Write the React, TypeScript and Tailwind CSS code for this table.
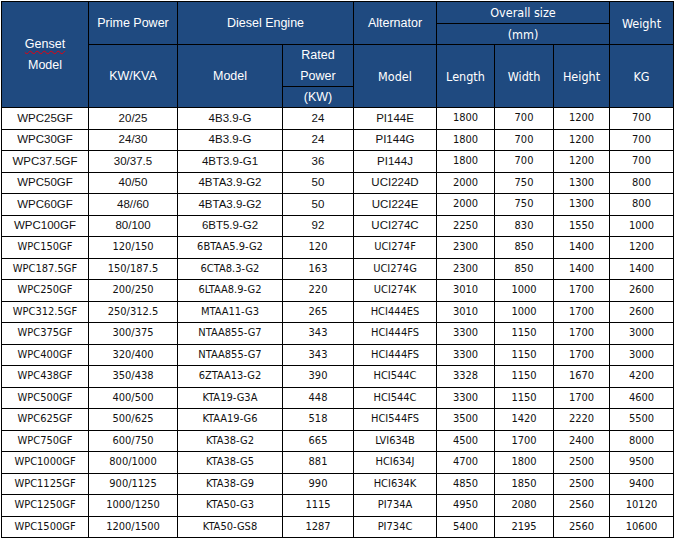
const rows = [
  ["WPC25GF", "20/25", "4B3.9-G", "24", "PI144E", "1800", "700", "1200", "700"],
  ["WPC30GF", "24/30", "4B3.9-G", "24", "PI144G", "1800", "700", "1200", "700"],
  ["WPC37.5GF", "30/37.5", "4BT3.9-G1", "36", "PI144J", "1800", "700", "1200", "700"],
  ["WPC50GF", "40/50", "4BTA3.9-G2", "50", "UCI224D", "2000", "750", "1300", "800"],
  ["WPC60GF", "48//60", "4BTA3.9-G2", "50", "UCI224E", "2000", "750", "1300", "800"],
  ["WPC100GF", "80/100", "6BT5.9-G2", "92", "UCI274C", "2250", "830", "1550", "1000"],
  ["WPC150GF", "120/150", "6BTAA5.9-G2", "120", "UCI274F", "2300", "850", "1400", "1200"],
  ["WPC187.5GF", "150/187.5", "6CTA8.3-G2", "163", "UCI274G", "2300", "850", "1400", "1400"],
  ["WPC250GF", "200/250", "6LTAA8.9-G2", "220", "UCI274K", "3010", "1000", "1700", "2600"],
  ["WPC312.5GF", "250/312.5", "MTAA11-G3", "265", "HCI444ES", "3010", "1000", "1700", "2600"],
  ["WPC375GF", "300/375", "NTAA855-G7", "343", "HCI444FS", "3300", "1150", "1700", "3000"],
  ["WPC400GF", "320/400", "NTAA855-G7", "343", "HCI444FS", "3300", "1150", "1700", "3000"],
  ["WPC438GF", "350/438", "6ZTAA13-G2", "390", "HCI544C", "3328", "1150", "1670", "4200"],
  ["WPC500GF", "400/500", "KTA19-G3A", "448", "HCI544C", "3300", "1150", "1700", "4600"],
  ["WPC625GF", "500/625", "KTAA19-G6", "518", "HCI544FS", "3500", "1420", "2220", "5500"],
  ["WPC750GF", "600/750", "KTA38-G2", "665", "LVI634B", "4500", "1700", "2400", "8000"],
  ["WPC1000GF", "800/1000", "KTA38-G5", "881", "HCI634J", "4700", "1800", "2500", "9500"],
  ["WPC1125GF", "900/1125", "KTA38-G9", "990", "HCI634K", "4850", "1850", "2500", "9400"],
  ["WPC1250GF", "1000/1250", "KTA50-G3", "1115", "PI734A", "4950", "2080", "2560", "10120"],
  ["WPC1500GF", "1200/1500", "KTA50-GS8", "1287", "PI734C", "5400", "2195", "2560", "10600"],
];

// header fonts
const arialHead = "font-['Liberation_Sans',Arial,sans-serif] text-[12.5px]";
const tahomaHead = "font-['DejaVu_Sans_Condensed','DejaVu_Sans',sans-serif] text-[12.5px]";
// body fonts
const arial = "font-['Liberation_Sans',Arial,sans-serif] text-[11.5px]";
const tahoma = "font-['DejaVu_Sans_Condensed','DejaVu_Sans',sans-serif] text-[11px]";

function Head({ children, className = "", font = arialHead }: { children: React.ReactNode; className?: string; font?: string }) {
  return (
    <div className={`bg-[#1f4a80] text-white flex items-center justify-center text-center leading-[21px] ${font} ${className}`}>
      {children}
    </div>
  );
}

export default function App() {
  return (
    <div className="bg-white w-[676px] h-[540px] pt-px pl-px">
      <div className="grid w-max bg-black gap-px p-px grid-cols-[86px_88px_104px_70px_82px_57px_58px_55px_63px] grid-rows-[21px_20px_41px_20px_repeat(10,21px_20px)]">
        {/* header */}
        <Head className="row-span-4">
          <span>
            <span className="underline decoration-wavy decoration-red-600 decoration-1 underline-offset-2">Genset</span>
            <br />
            Model
          </span>
        </Head>
        <Head className="row-span-2">Prime Power</Head>
        <Head className="row-span-2 col-span-2">Diesel Engine</Head>
        <Head className="row-span-2">Alternator</Head>
        <Head className="col-span-3" font={tahomaHead}>Overall size</Head>
        <Head className="row-span-2" font={tahomaHead}>Weight</Head>
        <Head className="col-span-3" font={tahomaHead}>(mm)</Head>
        <Head className="row-span-2">KW/KVA</Head>
        <Head className="row-span-2">Model</Head>
        <Head>
          <span>
            Rated
            <br />
            Power
          </span>
        </Head>
        <Head className="row-span-2" font={tahomaHead}>Model</Head>
        <Head className="row-span-2" font={tahomaHead}>Length</Head>
        <Head className="row-span-2" font={tahomaHead}>Width</Head>
        <Head className="row-span-2" font={tahomaHead}>Height</Head>
        <Head className="row-span-2" font={tahomaHead}>KG</Head>
        <Head>(KW)</Head>

        {/* body */}
        {rows.map((r, i) =>
          r.map((c, j) => (
            <div
              key={i + "-" + j}
              className={`bg-white text-[#111] flex items-center justify-center ${i < 6 && j < 5 ? arial : tahoma}`}
            >
              {c}
            </div>
          ))
        )}
      </div>
    </div>
  );
}
